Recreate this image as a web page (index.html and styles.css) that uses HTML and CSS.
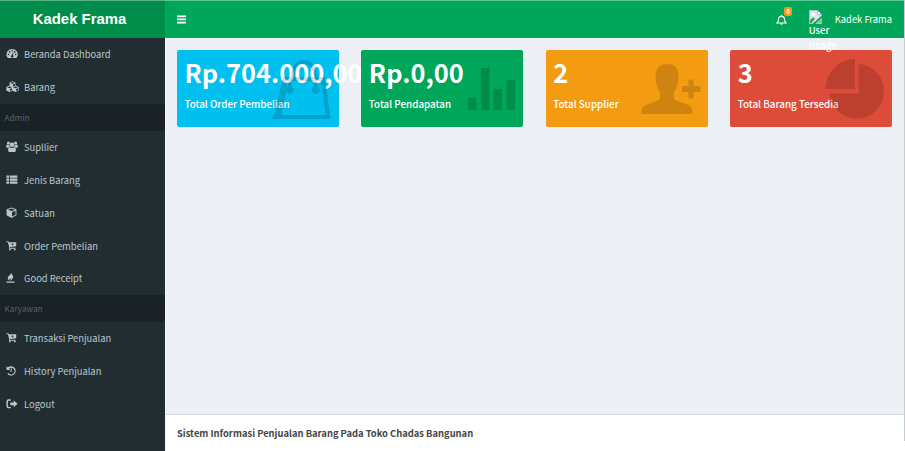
FILE: index.html
```html
<!DOCTYPE html>
<html lang="id">
<head>
<meta charset="utf-8">
<title>Kadek Frama</title>
<link rel="stylesheet" href="styles.css">
</head>
<body>
<div class="app">
  <aside class="sidebar">
    <div class="logo"><span>Kadek Frama</span></div>
    <nav class="menu">
      <a class="item"><svg class="ico" viewBox="0 0 14 12"><path fill-rule="evenodd" d="M6.100 1a5.500 5.500 0 0 1 4.700 8.600q-.2.400-.6.400H2q-.4 0-.6-.4A5.500 5.500 0 0 1 6.100 1zM2.500 5.700a.8.800 0 1 0 0 1.600.8.800 0 0 0 0-1.600zM3.600 3.100a.8.800 0 1 0 0 1.600.8.800 0 0 0 0-1.600zM6.100 2a.8.800 0 1 0 0 1.600.8.800 0 0 0 0-1.600zM8.700 3.100a.8.800 0 1 0 0 1.600.8.800 0 0 0 0-1.600zM9.700 5.700a.8.800 0 1 0 0 1.600.8.800 0 0 0 0-1.600zM6.800 4.300l-.7 2.600a1.300 1.300 0 1 0 .8.200l.6-2.600z"/></svg><span>Beranda Dashboard</span></a>
      <a class="item"><svg class="ico" viewBox="0 0 14 12"><path fill-rule="evenodd" d="M6.500.2l3 1.200v3.200l3.200 1.300v3.700L9.600 11 6.500 9.700 3.500 11 .3 9.600V5.900l3.200-1.300V1.400zM4.200 1.900l2.300.9 2.300-.9L6.500 1zM7 3.500v2.200l1.900-.8V2.700zM1.200 6.300l2.300.9 2.300-.9-2.300-.9zM4 8v2.100l2-.9V7.200zM7.300 6.300l2.300.9 2.300-.9-2.300-.9zM10.100 8v2.100l2-.9V7.200z"/></svg><span>Barang</span></a>
      <div class="head">Admin</div>
      <a class="item"><svg class="ico" viewBox="0 0 14 12"><circle cx="2.400" cy="2.100" r="1.500"/><circle cx="9.600" cy="2.100" r="1.500"/><circle cx="6" cy="3.800" r="2.300"/><path d="M.3 6.500V4.800Q.3 3.600 1 3.600q1.300.8 2.400.2-.1 1.200.5 2.100-1 0-1.600.9H1Q.3 6.800.3 6.500zM11.700 6.500V4.800q0-1.200-.7-1.200-1.300.8-2.400.2.100 1.200-.5 2.100 1 0 1.600.9H11q.7 0 .7-.3zM2.100 9.200q0-3 1.800-3 2.100 1.500 4.200 0 1.800 0 1.800 3Q9.900 11 8.500 11h-5Q2.100 11 2.100 9.200z"/></svg><span>Supllier</span></a>
      <a class="item"><svg class="ico" viewBox="0 0 14 12"><path d="M.4 1.400h2.800v2.300H.4zM4 1.400h7.400v2.300H4zM.4 4.400h2.800v2.300H.4zM4 4.400h7.400v2.300H4zM.4 7.400h2.800v2.300H.4zM4 7.400h7.400v2.300H4z"/></svg><span>Jenis Barang</span></a>
      <a class="item"><svg class="ico" viewBox="0 0 14 12"><path fill-rule="evenodd" d="M5.500.6l4.900 1.700v6L5.500 11 .6 8.300v-6zM1.800 2.700l3.700 1.400 3.700-1.400-3.700-1.300zM6 9.600l3.500-1.800V3.700L6 5z"/></svg><span>Satuan</span></a>
      <a class="item"><svg class="ico" viewBox="0 0 14 12"><path fill-rule="evenodd" d="M.5 1.300h2l.3.900h7.400v4L4 7.100l-.1.700h5.700v.9H2.900l.3-1.400L1.900 2.200H.5zM6.200 3v1H5.200v.6h1v1h.6v-1h1V4h-1V3z"/><circle cx="3.900" cy="9.600" r=".9"/><circle cx="8.800" cy="9.600" r=".9"/></svg><span>Order Pembelian</span></a>
      <a class="item"><svg class="ico" viewBox="0 0 14 12"><path d="M5.200.3q-.1 1.500 1 2.400 1.300 1.200.9 2.900-.5 1.900-3 3.200.9-1.700.1-2.700-1.200 1-.9 2.700Q1 7.200 1.900 5.100q.4-.9 1.500-1.700Q5.100 2.200 5.200.3zM.5 9.600h8v1.100h-8z"/></svg><span>Good Receipt</span></a>
      <div class="head">Karyawan</div>
      <a class="item"><svg class="ico" viewBox="0 0 14 12"><path fill-rule="evenodd" d="M.5 1.300h2l.3.900h7.400v4L4 7.100l-.1.700h5.700v.9H2.900l.3-1.400L1.900 2.200H.5zM6.200 3v1H5.200v.6h1v1h.6v-1h1V4h-1V3z"/><circle cx="3.900" cy="9.600" r=".9"/><circle cx="8.800" cy="9.600" r=".9"/></svg><span>Transaksi Penjualan</span></a>
      <a class="item"><svg class="ico" viewBox="0 0 14 12"><path d="M.5 1.200v3.700h3.700L3.100 3.700A3.200 3.200 0 1 1 2.600 7.900l-1.300.9A4.700 4.700 0 1 0 1.800 2.500zM4.800 3.600h1v3H3.900v-.9h.9z"/></svg><span>History Penjualan</span></a>
      <a class="item"><svg class="ico" viewBox="0 0 14 12"><path d="M4.800 1.300v1.400H3q-1.100 0-1.100 1.100v4Q1.900 8.900 3 8.900h1.800v1.400H2.700Q.4 10.300.4 8V3.600q0-2.300 2.300-2.300zM7.700 2.400l3.900 3.400-3.900 3.400V7.200H4.300V4.400h3.400z"/></svg><span>Logout</span></a>
    </nav>
  </aside>
  <div class="main">
    <header class="topbar">
      <svg class="burger" viewBox="0 0 9 9"><path d="M0 .5h9v1.700H0zM0 3.600h9v1.700H0zM0 6.700h9v1.700H0z"/></svg>
      <div class="bell">
        <svg viewBox="0 0 12 12"><path d="M1 9.200Q2.700 7.700 2.700 5.100 2.700 2 6 2t3.300 3.100q0 2.600 1.700 4.100z" fill="none" stroke="#fff" stroke-width="1.200"/><path d="M5.400.6h1.200v1.300H5.400zM4.600 9.500h2.800Q7.300 11.200 6 11.200T4.600 9.500z" fill="#fff"/></svg>
        <b class="badge">0</b>
      </div>
      <div class="user">
        <div class="avatar">
          <svg viewBox="0 0 13 14"><path d="M.5.500h8l4 4v9H.5z" fill="#dbe5f5" stroke="#b7bfc2"/><path d="M8.500.5v4h4z" fill="#fff" stroke="#b7bfc2"/><circle cx="4.300" cy="4.300" r="1.700" fill="#fff"/><path d="M1 12.900V10l3-2.800 2.200 1.600-3.600 4.100z" fill="#4f9b55"/><path d="M3.300 14L13 5.300v2.500L6.200 14z" fill="#00a65a"/><path d="M7.500 12.900l5-4.500v4.500z" fill="#8cc190"/></svg>
          <span>User Image</span>
        </div>
        <span class="name">Kadek Frama</span>
      </div>
    </header>
    <section class="content">
      <div class="box aqua">
        <h3>Rp.704.000,00</h3><p>Total Order Pembelian</p>
        <svg class="art" viewBox="0 0 70 77"><path fill-rule="evenodd" d="M6 27h7.500Q14 10 26.500 10T40 27h7.500L53 69H-5zM10.200 31l-6 34h44L43.500 31H40v5.200a4 4 0 1 1-3.500 0V31H14v5.200a4 4 0 1 1-3.500 0V31zM17 27h19.500Q35 14 26.500 14T17 27z" transform="translate(.5 0)"/></svg>
      </div>
      <div class="box green">
        <h3>Rp.0,00</h3><p>Total Pendapatan</p>
        <svg class="art" viewBox="0 0 70 77"><path d="M7 47.500H15.500V60H7zM20 18h8.500v42H20zM32.500 39H41v21h-8.500zM45.500 30H54v30h-8.500z"/></svg>
      </div>
      <div class="box orange">
        <h3>2</h3><p>Total Supplier</p>
        <svg class="art" viewBox="0 0 70 77"><path d="M21 14q11.500 0 11.500 12.500 0 9-4.500 15.500v5.500q0 2.200 3 3.300l9.500 3.400q6 2.100 6 7.300V64H-4.500v-2.500q0-5.200 6-7.300l9.500-3.400q3-1.100 3-3.300V42q-4.500-6.500-4.500-15.500Q9.500 14 21 14zM42.500 29.500h5V36H54.500v6h-7v6.500h-5V42H36v-6h6.500z"/></svg>
      </div>
      <div class="box red">
        <h3>3</h3><p>Total Barang Tersedia</p>
        <svg class="art" viewBox="0 0 70 77"><path d="M25 9v30H-4.500A29.700 29.700 0 0 1 25 9zM28.500 14A27.300 27.300 0 1 1-.5 43.500h29z"/></svg>
      </div>
    </section>
    <footer class="footer"><strong>Sistem Informasi Penjualan Barang Pada Toko Chadas Bangunan</strong></footer>
  </div>
  <div class="edge"><i></i></div>
</div>
</body>
</html>
```
FILE: styles.css
```css
* { box-sizing: border-box; }
body {
  margin: 0;
  height: 451px;
  overflow: hidden;
  background: #ecf0f5;
  font: 400 9.4px/14px "Noto Sans CJK SC", "Open Sans", sans-serif;
}
.app { display: flex; height: 451px; }
.sidebar { width: 165px; background: #222d32; color: #b8c7ce; }
.logo {
  height: 38px;
  border-top: 1px solid #59b787;
  background: #008d4c;
  color: #fff;
  text-align: center;
  font: bold 14.900px/36px "Liberation Sans", sans-serif;
  padding-right: 6px;
}
.menu { display: flex; flex-direction: column; }
.item { display: flex; align-items: center; height: 32.8px; padding-left: 6.500px; white-space: nowrap; }
.ico { width: 14px; height: 12px; margin-right: 3.900px; margin-left: -.4px; fill: #b8c7ce; flex: none; overflow: visible; }
.head { height: 27.2px; padding-left: 4.500px; background: #1a2226; color: #4b646f; font-size: 8.200px; line-height: 27px; }
.main { flex: 1; min-width: 0; display: flex; flex-direction: column; border-left: 1px solid #f5f8fa; }
.topbar {
  position: relative;
  z-index: 1;
  height: 38px;
  flex: none;
  display: flex;
  align-items: center;
  margin-left: -1px;
  padding: 0 12px;
  border-top: 1px solid #59c894;
  background: #00a65a;
  color: #fff;
}
.burger { width: 9px; height: 9px; fill: #fff; }
.bell { position: relative; width: 12px; height: 12px; margin-left: auto; }
.bell svg { display: block; width: 11px; height: 12px; }
.badge {
  position: absolute;
  left: 8.500px;
  top: -7px;
  width: 8px;
  height: 9px;
  border-radius: 2px;
  background: #f39c12;
  font-size: 6px;
  line-height: 9px;
  text-align: center;
}
.user { display: flex; height: 37px; margin-left: 21px; }
.avatar { width: 19px; margin-right: 7px; padding-top: 9px; line-height: 15px; font-weight: 500; }
.avatar svg { display: block; width: 13px; height: 14px; margin-bottom: -1.500px; }
.name { line-height: 36px; white-space: nowrap; }
.content { flex: 1; display: grid; grid-template-columns: repeat(4, 162px); column-gap: 22.450px; align-content: start; padding: 12px 11px; }
.box { position: relative; height: 77px; padding: 5px 0 0 7.400px; border-radius: 2px; color: #fff; white-space: nowrap; }
.box h3 { margin: 0; font-size: 25.400px; line-height: 34px; font-weight: 700; }
.box p { margin: 8px 0 0; font-size: 9.850px; line-height: 14px; font-weight: 500; }
.art { position: absolute; right: -8px; top: 0; width: 70px; height: 77px; fill: rgba(0, 0, 0, .15); overflow: visible; }
.aqua { background: #00c0ef; }
.green { background: #00a65a; }
.orange { background: #f39c12; }
.red { background: #dd4b39; }
.footer { height: 37px; padding: 11px; border-top: 1px solid #d2d6de; background: #fff; color: #444; font-size: 9.400px; }
.edge { width: 1px; background: #fff; }
.edge i { display: block; height: 441px; background: #c9cccf; }
```
